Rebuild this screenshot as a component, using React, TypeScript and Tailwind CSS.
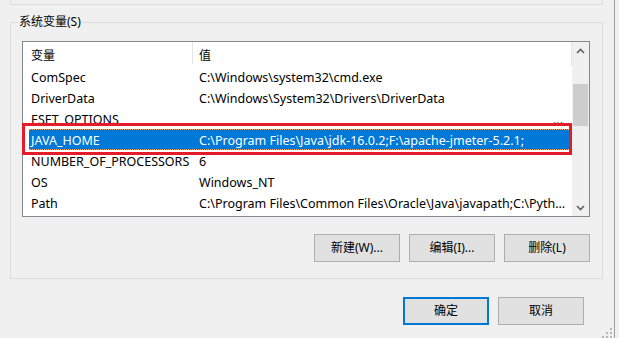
import React from "react";

const rows: { name: string; value: string; selected?: boolean; dots?: boolean }[] = [
  { name: "ComSpec", value: "C:\\Windows\\system32\\cmd.exe" },
  { name: "DriverData", value: "C:\\Windows\\System32\\Drivers\\DriverData" },
  { name: "ESET_OPTIONS", value: "", dots: true },
  { name: "JAVA_HOME", value: "C:\\Program Files\\Java\\jdk-16.0.2;F:\\apache-jmeter-5.2.1;", selected: true },
  { name: "NUMBER_OF_PROCESSORS", value: "6" },
  { name: "OS", value: "Windows_NT" },
  { name: "Path", value: "C:\\Program Files\\Common Files\\Oracle\\Java\\javapath;C:\\Pyth..." },
];

function Btn({ children, primary }: { children: React.ReactNode; primary?: boolean }) {
  return (
    <div
      className={
        "w-[86px] h-[28px] flex items-center justify-center bg-[#e1e1e1] text-[12px] text-black " +
        (primary ? "border-2 border-[#0078d7]" : "border border-[#adadad]")
      }
    >
      {children}
    </div>
  );
}

export default function App() {
  return (
    <div
      className="relative w-[619px] h-[338px] bg-[#f0f0f0] flex overflow-hidden text-black"
      style={{ fontFamily: '"Noto Sans", "Noto Sans CJK SC", sans-serif' }}
    >
      <div className="w-[614px] flex flex-col shrink-0">
        <div className="ml-[10px] w-[593px] h-[5px] border-x border-b border-[#dcdcdc]" />
        <div className="relative ml-[10px] mt-[17px] w-[593px] h-[257px] border border-[#dcdcdc] pt-[18px] pl-[11px] flex flex-col">
          <div className="absolute left-[7px] top-[-9px] px-[1px] bg-[#f0f0f0] text-[12px] leading-[16px]">
            系统变量(S)
          </div>
          <div className="w-[568px] h-[176px] border border-[#828790] bg-white flex">
            <div className="w-[549px] flex flex-col overflow-hidden">
              <div className="h-[24px] flex border-r border-[#e5e5e5] text-[12px]">
                <div className="w-[169px] pl-[8px] pt-[3px] flex items-center">变量</div>
                <div className="w-px h-[22px] bg-[#e5e5e5]" />
                <div className="flex-1 pl-[6px] pt-[3px] flex items-center">值</div>
              </div>
              {rows.map((r) => (
                <div key={r.name} className="h-[21px] flex pl-[6px] pr-[1px] text-[12.5px]">
                  <div
                    className={
                      "flex-1 flex min-w-0 " +
                      (r.selected
                        ? "bg-[#0078d7] text-white border-y border-dotted border-[#f0a868]"
                        : "")
                    }
                  >
                    <div className="w-[163px] pl-[2px] pt-[3px] flex items-center whitespace-nowrap overflow-hidden">
                      {r.name}
                    </div>
                    <div className="flex-1 min-w-0 pl-[7px] pr-[8px] pt-[3px] flex items-center whitespace-nowrap overflow-hidden">
                      {r.dots ? <span className="ml-auto">...</span> : r.value}
                    </div>
                  </div>
                </div>
              ))}
            </div>
            <div className="w-[17px] bg-[#f0f0f0] flex flex-col">
              <div className="h-[17px] flex items-center justify-center">
                <svg width="9" height="6" viewBox="0 0 9 6">
                  <path d="M1 5 L4.5 1.5 L8 5" fill="none" stroke="#606060" strokeWidth="1.6" />
                </svg>
              </div>
              <div className="flex-1 flex flex-col">
                <div className="mt-[25px] ml-px mr-px h-[42px] bg-[#cdcdcd]" />
              </div>
              <div className="h-[17px] flex items-center justify-center">
                <svg width="9" height="6" viewBox="0 0 9 6">
                  <path d="M1 1 L4.5 4.5 L8 1" fill="none" stroke="#606060" strokeWidth="1.6" />
                </svg>
              </div>
            </div>
          </div>
          <div className="mt-[17px] w-[568px] flex justify-end gap-[9px]">
            <Btn>新建(W)...</Btn>
            <Btn>编辑(I)...</Btn>
            <Btn>删除(L)</Btn>
          </div>
        </div>
        <div className="mt-[18px] pr-[30px] flex justify-end gap-[9px]">
          <Btn primary>确定</Btn>
          <Btn>取消</Btn>
        </div>
      </div>
      <div className="w-px h-full bg-[#a0a0a0]" />
      <div className="flex-1" />
      <div className="absolute left-[22px] top-[123px] w-[550px] h-[32px] border-[3px] border-[#e51b2a]" />
      <svg className="absolute left-[602px] top-[327px]" width="12" height="11" viewBox="0 0 12 11">
        <g fill="#b8b8b8">
          <rect x="8" y="1" width="2" height="2" />
          <rect x="8" y="5" width="2" height="2" />
          <rect x="4" y="5" width="2" height="2" />
          <rect x="8" y="9" width="2" height="2" />
          <rect x="4" y="9" width="2" height="2" />
          <rect x="0" y="9" width="2" height="2" />
        </g>
      </svg>
    </div>
  );
}
